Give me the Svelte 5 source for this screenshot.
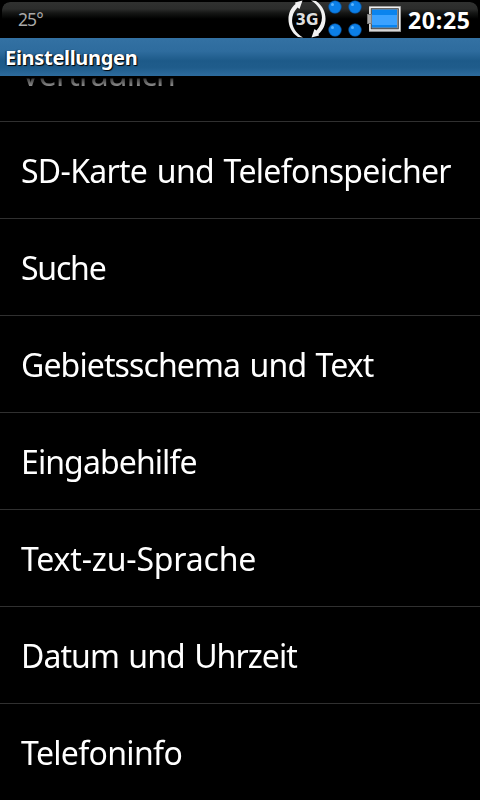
<script lang="ts">
	// tracking per label, the rows are set tighter than the font's default
	const items = [
		{ label: 'Vertraulich', spacing: -0.85 },
		{ label: 'SD-Karte und Telefonspeicher', spacing: -0.7 },
		{ label: 'Suche', spacing: -1.2 },
		{ label: 'Gebietsschema und Text', spacing: -0.88 },
		{ label: 'Eingabehilfe', spacing: -0.9 },
		{ label: 'Text-zu-Sprache', spacing: -0.18 },
		{ label: 'Datum und Uhrzeit', spacing: -0.93 },
		{ label: 'Telefoninfo', spacing: -0.67 }
	];

	const dots = [
		[7, 7],
		[27, 7],
		[7, 30],
		[27, 30]
	];
</script>

<div class="screen">
	<header class="status">
		<span class="temp">25°</span>

		<!-- 3G sync -->
		<svg class="net" width="42" height="38" viewBox="0 0 42 38">
			<g fill="#f2f2f2">
				<path d="M16.500 0.500L9 2.500L9.500 4C-0.500 12 0 29 12 37L17 37.500C3.500 29 3.500 16 11.500 7.500L13.500 9Z" />
				<path d="M25.500 37.500L33 35.500L32.500 34C42.500 26 42 9 30 1L25 0.500C38.500 9 38.500 22 30.500 30.500L28.500 29Z" />
			</g>
			<text x="9.500" y="24.500" textLength="23" lengthAdjust="spacingAndGlyphs">3G</text>
		</svg>

		<!-- signal dots -->
		<svg class="dots" width="36" height="38" viewBox="0 0 36 38">
			{#each dots as [cx, cy]}
				<circle {cx} {cy} r="6.300" fill="#0b7fe8" stroke="#0a4f96" stroke-width="0.600" />
				<circle cx={cx - 2.5} cy={cy - 2.5} r="1.500" fill="#58b4ff" />
			{/each}
		</svg>

		<!-- battery -->
		<svg class="battery" width="35" height="38" viewBox="0 0 35 38">
			<rect x="2" y="6" width="32" height="26" fill="#888" />
			<rect x="3" y="7.500" width="29.500" height="22.500" fill="#333" stroke="#f0f0f0" stroke-width="1.500" />
			<rect x="0.500" y="14.500" width="4" height="9" fill="#aaa" stroke="#777" />
			<rect x="4.500" y="9" width="26.500" height="19.500" fill="#888" />
			<rect x="5" y="9.500" width="25" height="18" fill="#0a84ee" />
			<rect x="5" y="15" width="25" height="10" fill="#3ba2ff" />
		</svg>

		<span class="clock">20:25</span>
	</header>

	<h1>Einstellungen</h1>

	<ul>
		{#each items as item}
			<li><span style="letter-spacing:{item.spacing}px">{item.label}</span></li>
		{/each}
	</ul>
</div>

<style>
	:global(body) {
		margin: 0;
		background: #000;
	}

	.screen {
		width: 480px;
		height: 800px;
		display: flex;
		flex-direction: column;
		overflow: hidden;
		background: #000;
		color: #fff;
		font-family: 'Noto Sans', sans-serif;
	}

	/* ── status bar ── */
	.status {
		box-sizing: border-box;
		display: flex;
		flex: none;
		height: 38px;
		padding: 0 7px 0 16px;
		border: solid #000;
		border-width: 2px 2px 0;
		border-radius: 10px 10px 0 0;
		background: linear-gradient(#303130, #2b2c2b 7px, #151615 11px, #000 17px) padding-box;
	}

	.status > * {
		flex: none;
		margin-top: -2px;
	}

	.status .temp {
		flex: 1;
		color: #a8a8a8;
		font-size: 17.500px;
		letter-spacing: -0.900px;
		line-height: 38px;
	}

	.net text {
		fill: #ddd;
		font-family: 'DejaVu Sans', sans-serif;
		font-size: 15px;
		font-weight: 700;
	}

	.battery {
		margin-left: 3px;
	}

	.clock {
		width: 63px;
		margin-left: 6px;
		font-size: 23px;
		font-weight: 700;
		letter-spacing: 0.700px;
		line-height: 40px;
	}

	/* ── title ── */
	h1 {
		flex: none;
		margin: 0;
		padding-left: 5px;
		height: 38px;
		font-size: 20px;
		letter-spacing: -0.300px;
		line-height: 39px;
		text-shadow: 1px 1px 1px #000, -1px 0 1px #123;
		background: linear-gradient(#3371a3, #2e6c9e 35%, #1d5a89 60%, #1f5c8b 78%, #2d6b9d);
	}

	/* ── list, scrolled to its end, top edge fades out ── */
	ul {
		flex: 1;
		min-height: 0;
		margin: 0 0 -1px;
		padding: 0;
		list-style: none;
		overflow: hidden;
		display: flex;
		flex-direction: column;
		justify-content: flex-end;
		mask-image: linear-gradient(transparent 2px, rgba(0, 0, 0, 0.25) 3px, rgba(0, 0, 0, 0.6) 11px, #000 30px);
	}

	li {
		flex: none;
		box-sizing: border-box;
		height: 97px;
		padding: 1px 0 0 21px;
		border-bottom: 1px solid #303030;
		font-size: 32px;
		line-height: 96px;
		word-spacing: 2px;
		white-space: nowrap;
	}
</style>
